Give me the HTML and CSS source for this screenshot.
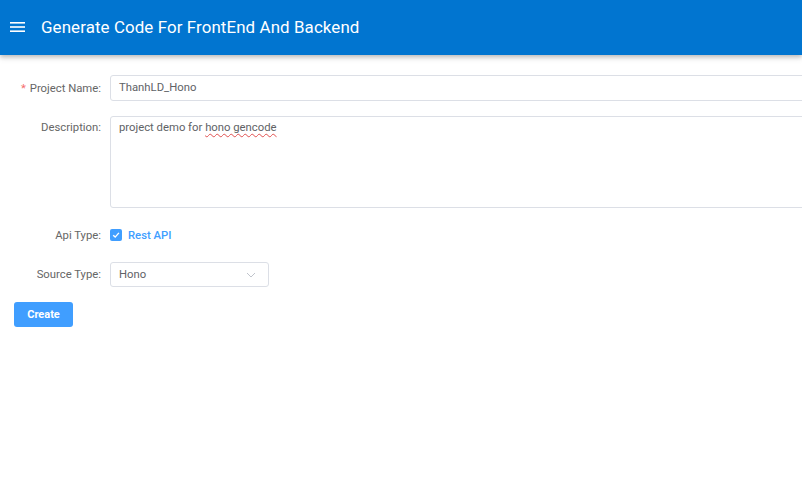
FILE: index.html
```html
<!DOCTYPE html>
<html>
<head>
<meta charset="utf-8">
<link rel="stylesheet" href="styles.css">
</head>
<body>
<header class="appbar">
  <svg class="menu-icon" width="18" height="18" viewBox="0 0 18 18"><rect x="1" y="4" width="15" height="1.6" fill="#fff"/><rect x="1" y="8.2" width="15" height="1.6" fill="#fff"/><rect x="1" y="12.4" width="15" height="1.6" fill="#fff"/></svg>
  <h1 class="title">Generate Code For FrontEnd And Backend</h1>
</header>
<main class="content">
  <form class="form">
    <div class="row">
      <label class="label"><span class="req">*</span>Project Name:</label>
      <div class="control"><div class="input">ThanhLD_Hono</div></div>
    </div>
    <div class="row">
      <label class="label label-top">Description:</label>
      <div class="control"><div class="textarea">project demo for <span class="spell">hono gencode</span></div></div>
    </div>
    <div class="row">
      <label class="label">Api Type:</label>
      <div class="control checkrow">
        <span class="checkbox"><svg width="12" height="12" viewBox="0 0 12 12"><path d="M3.2 6.2 L5.2 8.1 L8.9 3.9" fill="none" stroke="#fff" stroke-width="1.4"/></svg></span>
        <span class="check-label">Rest API</span>
      </div>
    </div>
    <div class="row">
      <label class="label">Source Type:</label>
      <div class="control"><div class="select"><span>Hono</span><svg width="10" height="6" viewBox="0 0 10 6"><path d="M1 1 L5 5 L9 1" fill="none" stroke="#c0c4cc" stroke-width="1"/></svg></div></div>
    </div>
    <div class="actions"><button type="button" class="btn">Create</button></div>
  </form>
</main>
</body>
</html>
```
FILE: styles.css
```css
html, body {
  margin: 0;
  padding: 0;
  background: #fff;
  overflow: hidden;
  font-family: Roboto, "Liberation Sans", sans-serif;
}
.appbar {
  height: 55px;
  box-sizing: border-box;
  padding-bottom: 2px;
  background: #0175d0;
  display: flex;
  align-items: center;
  box-shadow: 0 2px 4px rgba(0,0,0,0.2), 0 4px 6px rgba(0,0,0,0.08);
  position: relative;
}
.menu-icon {
  margin-left: 9px;
  margin-right: 14px;
  display: block;
}
.title {
  margin: 0;
  color: #fff;
  font-size: 16.9px;
  font-weight: 400;
  letter-spacing: 0.1px;
}
.content {
  padding: 20px 0 0 14px;
}
.form {
  display: flex;
  flex-direction: column;
}
.row {
  display: flex;
  align-items: center;
  margin-bottom: 15px;
  font-size: 11.3px;
}
.label {
  width: 87px;
  flex: none;
  text-align: right;
  color: #666;
  padding-right: 9px;
}
.label-top {
  align-self: flex-start;
  padding-top: 5px;
}
.req {
  color: #f56c6c;
  margin-right: 4px;
}
.control {
  flex: 1;
  min-width: 0;
}
.input {
  width: 720px;
  height: 24px;
  line-height: 24px;
  border: 1px solid #dcdfe6;
  border-radius: 3px;
  padding-left: 8px;
  color: #606266;
  box-sizing: content-box;
}
.textarea {
  width: 720px;
  height: 80px;
  border: 1px solid #dcdfe6;
  border-radius: 3px;
  padding: 4px 8px 6px;
  color: #606266;
  line-height: 14px;
}
.spell {
  text-decoration: underline wavy #e05050;
  text-decoration-thickness: 1px;
  text-underline-offset: 2px;
}
.checkrow {
  display: flex;
  align-items: center;
  height: 24px;
}
.checkbox {
  width: 12px;
  height: 12px;
  background: #409eff;
  border-radius: 2px;
  display: flex;
}
.check-label {
  margin-left: 6px;
  color: #409eff;
  font-weight: 500;
}
.select {
  height: 23px;
  border: 1px solid #dcdfe6;
  border-radius: 3px;
  display: flex;
  align-items: center;
  justify-content: space-between;
  padding: 0 12px 0 8px;
  box-sizing: content-box;
  width: 137px;
  color: #606266;
}
.actions {
  margin-top: 0;
}
.btn {
  background: #409eff;
  color: #fff;
  border: none;
  border-radius: 3px;
  width: 59px;
  height: 25px;
  font-family: Roboto, "Liberation Sans", sans-serif;
  font-size: 11px;
  font-weight: 700;
  padding: 0;
}
```
